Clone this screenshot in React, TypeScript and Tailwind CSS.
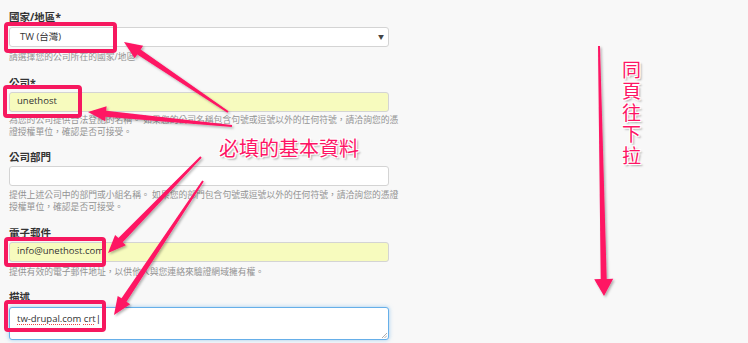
import React from "react";

const PINK = "#fe1464";
const BOX = "#f6185f";

type Pt = [number, number];

// tapered arrow as a single polygon: thin tail, thicker shaft near the head
function arrowPoints(tail: Pt, tip: Pt, w1: number, w2: number, len: number, head: number) {
  const dx = tip[0] - tail[0];
  const dy = tip[1] - tail[1];
  const d = Math.hypot(dx, dy);
  const ux = dx / d;
  const uy = dy / d;
  const nx = -uy;
  const ny = ux;
  const bx = tip[0] - ux * len;
  const by = tip[1] - uy * len;
  const pts: Pt[] = [
    [tail[0] + (nx * w1) / 2, tail[1] + (ny * w1) / 2],
    [bx + (nx * w2) / 2, by + (ny * w2) / 2],
    [bx + (nx * head) / 2, by + (ny * head) / 2],
    tip,
    [bx - (nx * head) / 2, by - (ny * head) / 2],
    [bx - (nx * w2) / 2, by - (ny * w2) / 2],
    [tail[0] - (nx * w1) / 2, tail[1] - (ny * w1) / 2],
  ];
  return pts.map((p) => `${p[0].toFixed(1)},${p[1].toFixed(1)}`).join(" ");
}

const arrows = [
  { tail: [228, 112] as Pt, tip: [124, 42] as Pt, w1: 2, w2: 6, len: 18, head: 15 },
  { tail: [232, 126] as Pt, tip: [88, 112] as Pt, w1: 2, w2: 6, len: 18, head: 15 },
  { tail: [201, 157] as Pt, tip: [108, 253] as Pt, w1: 2, w2: 6, len: 18, head: 15 },
  { tail: [203, 181] as Pt, tip: [114, 315] as Pt, w1: 2, w2: 6, len: 18, head: 15 },
  { tail: [599, 46] as Pt, tip: [604, 296] as Pt, w1: 2, w2: 6, len: 17, head: 19 },
];

const boxes = [
  { x: 6, y: 24, w: 109, h: 27 },
  { x: 5, y: 87, w: 75, h: 29 },
  { x: 6, y: 239, w: 98, h: 26 },
  { x: 6, y: 302, w: 98, h: 28 },
];

const glow =
  "[text-shadow:-1px_-1px_0_#fff,1px_-1px_0_#fff,-1px_1px_0_#fff,1px_1px_0_#fff,2px_2px_2px_rgba(0,0,0,0.35)]";

function Label({ children, className = "" }: { children: React.ReactNode; className?: string }) {
  return <div className={`h-[14px] text-[10.5px] font-bold leading-[14px] text-[#333] ${className}`}>{children}</div>;
}

function Help({ lines, className = "" }: { lines: string[]; className?: string }) {
  return (
    <div className={`text-[8.8px] leading-[12.5px] text-[#939393] ${className}`}>
      {lines.map((l) => (
        <div key={l} className="whitespace-nowrap">
          {l}
        </div>
      ))}
    </div>
  );
}

function Field({ value, filled }: { value?: string; filled?: boolean }) {
  return (
    <div
      className={`mt-[2px] flex h-[20px] items-center rounded-[3px] border border-[#d4d4d4] px-[7px] text-[9.5px] text-[#333] ${
        filled ? "bg-[#f7fbbe]" : "bg-white"
      }`}
    >
      {value}
    </div>
  );
}

export default function App() {
  return (
    <div
      className="relative h-[343px] w-[748px] overflow-hidden bg-[#f8f8f8]"
      style={{ fontFamily: '"Open Sans", "Noto Sans CJK TC", sans-serif' }}
    >
      <div className="flex w-[389px] flex-col pl-[9px] pt-[10px]">
        <Label>國家/地區*</Label>
        <div className="mt-[3px] flex h-[20px] items-center justify-between rounded-[3px] border border-[#d4d4d4] bg-white pl-[10px] pr-[4px] text-[9.5px] text-[#333]">
          <span>TW (台灣)</span>
          <span className="text-[6px] text-[#444]">▼</span>
        </div>
        <Help className="mt-[4px]" lines={["請選擇您的公司所在的國家/地區"]} />

        <Label className="mt-[12px]">公司*</Label>
        <Field value="unethost" filled />
        <Help
          className="mt-[2px]"
          lines={[
            "為您的公司提供合法登記的名稱。 如果您的公司名稱包含句號或逗號以外的任何符號，請洽詢您的憑",
            "證授權單位，確認是否可接受。",
          ]}
        />

        <Label className="mt-[11px]">公司部門</Label>
        <Field />
        <Help
          className="mt-[3px]"
          lines={[
            "提供上述公司中的部門或小組名稱。 如果您的部門包含句號或逗號以外的任何符號，請洽詢您的憑證",
            "授權單位，確認是否可接受。",
          ]}
        />

        <Label className="mt-[12px]">電子郵件</Label>
        <Field value="info@unethost.com" filled />
        <Help className="mt-[4px]" lines={["提供有效的電子郵件地址，以供他人與您連絡來驗證網域擁有權。"]} />

        <Label className="mt-[12px]">描述</Label>
        <div className="relative mt-[3px] h-[33px] rounded-[3px] border border-[#66afe9] bg-white px-[7px] pt-[3px] text-[9.5px] leading-[16px] text-[#333] shadow-[0_0_4px_rgba(102,175,233,0.6)]">
          <span className="underline decoration-[#e44] decoration-dotted decoration-1 underline-offset-[2px]">tw-drupal.com</span>{" "}
          <span className="underline decoration-[#e44] decoration-dotted decoration-1 underline-offset-[2px]">crt</span>
          <span className="text-[#111]">|</span>
          <svg className="absolute bottom-[1px] right-[1px]" width="6" height="6" viewBox="0 0 6 6">
            <path d="M1 6 L6 1 M3.5 6 L6 3.5" stroke="#999" strokeWidth="0.8" />
          </svg>
        </div>
      </div>

      {/* annotations drawn over the form */}
      <svg className="pointer-events-none absolute left-0 top-0" width="748" height="343" viewBox="0 0 748 343">
        <defs>
          <filter id="sh" x="-20%" y="-20%" width="140%" height="140%">
            <feDropShadow dx="1.5" dy="1.5" stdDeviation="1.2" floodColor="#000" floodOpacity="0.3" />
          </filter>
        </defs>
        {boxes.map((b, i) => (
          <rect key={i} x={b.x} y={b.y} width={b.w} height={b.h} rx="2" fill="none" stroke={BOX} strokeWidth="4" />
        ))}
        <g filter="url(#sh)">
          {arrows.map((a, i) => (
            <polygon key={i} points={arrowPoints(a.tail, a.tip, a.w1, a.w2, a.len, a.head)} fill={PINK} />
          ))}
        </g>
      </svg>

      <div
        className={`absolute left-[219px] top-[137px] whitespace-nowrap text-[20px] leading-[22px] text-[#fe1464] ${glow}`}
        style={{ fontFamily: '"Noto Sans CJK TC", sans-serif' }}
      >
        必填的基本資料
      </div>
      <div
        className={`absolute left-[620px] top-[60px] text-[19px] leading-[22px] tracking-[2.5px] text-[#fe1464] [writing-mode:vertical-rl] ${glow}`}
        style={{ fontFamily: '"Noto Sans CJK TC", sans-serif' }}
      >
        同頁往下拉
      </div>
    </div>
  );
}
